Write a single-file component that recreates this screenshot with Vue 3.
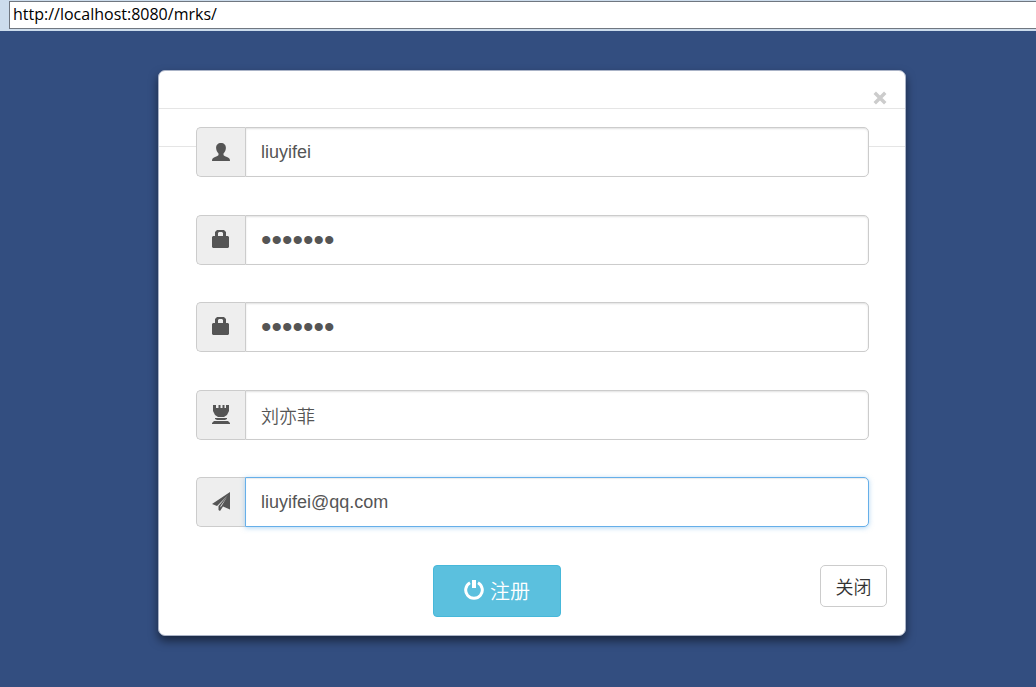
<script setup>
import { ref } from 'vue'

const address = ref('http://localhost:8080/mrks/')
const fields = ref([
  { id: 'username', label: '用户名', type: 'text', icon: 'user', value: 'liuyifei' },
  { id: 'password', label: '密码', type: 'password', icon: 'lock', value: 'liuyife' },
  { id: 'confirm', label: '确认密码', type: 'password', icon: 'lock', value: 'liuyife' },
  { id: 'realname', label: '姓名', type: 'text', icon: 'tower', value: '刘亦菲' },
  { id: 'email', label: '邮箱', type: 'text', icon: 'send', value: 'liuyifei@qq.com', active: true },
])
const icons = {
  user: 'M10 1C7 1 5 3 5.100 6c.1 2.200.9 4.200 2.400 5.400v1.600c-.3.8-1.600 1.200-3.500 2C1.800 15.900 1 16.700 1 19h18c0-2.300-.8-3.100-3-4-1.900-.8-3.200-1.200-3.500-2v-1.600c1.500-1.200 2.300-3.200 2.400-5.400C15 3 13 1 10 1z',
  lock: 'M4 6V2l2-2h7l2 2v4h2l1 1v10l-1 1H2l-1-1V7l1-1zM7 6h5V3l-1-1H8L7 3z',
  tower: 'M2 0h3v3h2.500V0h2v3h2V0h2v3H15V0h3v6l-2 4-3 2H7l-3-2-2-4zM4 13h12v1l-2 1H6l-2-1zM3 16h14l2 2v1H1v-1z',
  send: 'M19 0L1 12l5 2L17 3 7.500 14v4l1.500 1 3-4.500 7 3zM16 5l-5.500 9-1 1.500V14z',
}
</script>

<template>
  <div class="page">
    <header class="browser-bar">
      <input v-model="address" class="address" type="text" aria-label="地址" />
    </header>
    <main class="stage">
      <section class="modal" role="dialog" aria-label="注册">
        <div class="modal-header">
          <button class="dismiss" type="button" aria-label="关闭窗口">
            <svg viewBox="0 0 12 12" aria-hidden="true"><path d="M1.500 1.500l9 9M10.500 1.500l-9 9" /></svg>
          </button>
        </div>
        <div class="modal-header"></div>
        <form @submit.prevent>
          <div class="fields">
            <div v-for="field in fields" :key="field.id" class="input-group">
              <label class="addon" :for="field.id" :aria-label="field.label">
                <svg viewBox="0 0 20 20" aria-hidden="true"><path :d="icons[field.icon]" fill-rule="evenodd" /></svg>
              </label>
              <input
                :id="field.id"
                v-model="field.value"
                class="control"
                :class="{ active: field.active }"
                :type="field.type"
                autocomplete="off"
              />
            </div>
          </div>
          <div class="actions">
            <button class="register" type="submit">
              <svg viewBox="0 0 20 20" aria-hidden="true">
                <path class="ring" d="M6 2.800A8.300 8.300 0 1 0 14 2.800" />
                <path class="bar" d="M8 0h4v8H8z" />
              </svg>
              <span>注册</span>
            </button>
            <button class="close" type="button">关闭</button>
          </div>
        </form>
      </section>
    </main>
  </div>
</template>

<style>
body {
  margin: 0;
  background: #334e80;
}
</style>

<style scoped>
.page,
.page * {
  box-sizing: border-box;
}
.page {
  min-height: 100vh;
  background: #334e80;
  font-family: "Liberation Sans", "Noto Sans CJK SC", sans-serif;
  font-size: 18px;
}
.browser-bar {
  display: flex;
  padding: 1px 0 2px 9px;
  background: #ccdcec;
}
.address {
  flex: 1;
  min-width: 0;
  height: 28px;
  padding: 0 3px 2px;
  border: 1px solid #707780;
  border-right: 0;
  border-radius: 0;
  outline: 0;
  background: #fff;
  color: #000;
  font: 16px/24px "Open Sans", "Noto Sans", sans-serif;
}
.stage {
  padding: 39px 0 51px 28px;
}
.modal {
  max-width: 748px;
  margin: 0 auto;
  border: 1px solid #aab3c7;
  border-radius: 7px;
  background: #fff;
  box-shadow: 0 5px 10px rgba(0, 0, 0, 0.5);
}
.modal-header {
  display: flex;
  justify-content: flex-end;
  height: 38px;
  padding: 20px 18px 0;
  border-bottom: 1px solid #e5e5e5;
}
.dismiss {
  width: 14px;
  height: 14px;
  padding: 0;
  border: 0;
  background: none;
  cursor: pointer;
}
.dismiss svg {
  display: block;
  width: 14px;
  height: 14px;
  fill: none;
  stroke: #ccc;
  stroke-width: 3;
}
form {
  position: relative;
  margin-top: -20px;
}
.fields {
  display: flex;
  flex-direction: column;
  justify-content: space-between;
  height: 400px;
  margin: 0 36px 0 37px;
}
.input-group {
  display: flex;
  height: 50px;
}
.addon {
  display: flex;
  flex: none;
  align-items: center;
  justify-content: center;
  width: 49px;
  border: 1px solid #ccc;
  border-right: 0;
  border-radius: 5px 0 0 5px;
  background: #eee;
}
.addon svg {
  width: 20px;
  height: 20px;
  fill: #555;
}
.control {
  flex: 1;
  min-width: 0;
  height: 50px;
  padding: 0 15px;
  border: 1px solid #ccc;
  border-radius: 0 5px 5px 0;
  outline: 0;
  background: #fff;
  box-shadow: inset 0 1px 2px rgba(0, 0, 0, 0.12);
  color: #555;
  font: inherit;
  font-weight: 350;
}
.control[type="password"] {
  font-size: 30px;
}
.control.active {
  border-color: #66afe9;
  box-shadow: inset 0 1px 1px rgba(0, 0, 0, 0.08), 0 1px 5px rgba(102, 175, 233, 0.5);
}
.actions {
  display: grid;
  grid-template-columns: 1fr auto;
  gap: 4px;
  align-items: start;
  padding: 38px 18px 18px 19px;
}
.register {
  display: flex;
  align-items: center;
  justify-content: center;
  justify-self: center;
  gap: 6px;
  width: 128px;
  height: 52px;
  padding: 0 0 2px;
  border: 1px solid #46b8da;
  border-radius: 4px;
  background: #5bc0de;
  color: #fff;
  font: inherit;
  font-size: 20px;
  font-weight: 350;
  cursor: pointer;
}
.register svg {
  width: 20px;
  height: 20px;
}
.ring {
  fill: none;
  stroke: #fff;
  stroke-width: 3;
}
.bar {
  fill: #fff;
}
.close {
  width: 67px;
  height: 42px;
  padding: 0;
  border: 1px solid #ccc;
  border-radius: 5px;
  background: #fff;
  color: #333;
  font: inherit;
  font-weight: 350;
  cursor: pointer;
}
</style>
